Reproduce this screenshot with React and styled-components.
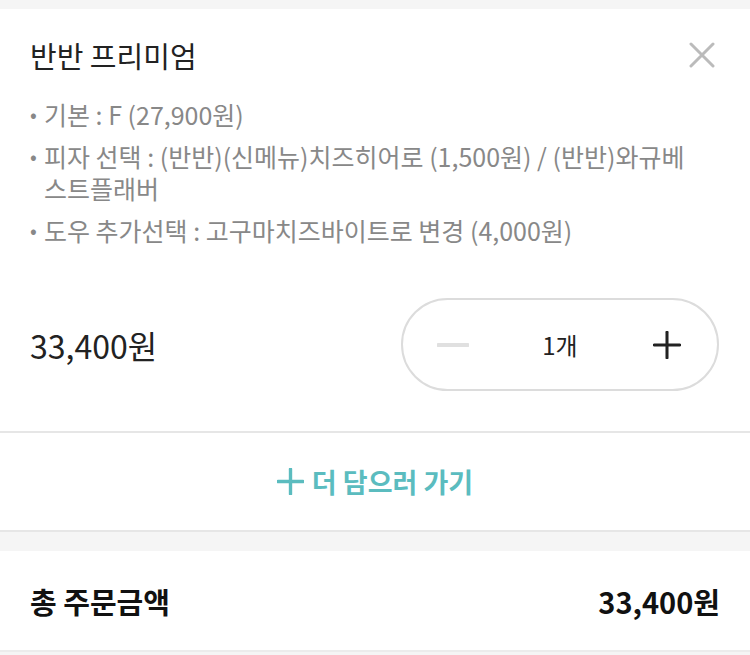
import React from 'react'
import styled, { createGlobalStyle } from 'styled-components'

const GlobalStyle = createGlobalStyle`
  * { box-sizing: border-box; }
  body {
    margin: 0;
    background: #f5f5f5;
    font-family: "Noto Sans CJK KR", "Noto Sans", sans-serif;
    color: #222;
  }
`;

const Page = styled.div`
  padding-top: 9px;
  background: #f5f5f5;
`;

const Card = styled.div`
  background: #fff;
  padding: 24px 30px 40px;
  border-bottom: 2px solid #e6e6e6;
`;

const TitleRow = styled.div`
  display: flex;
  justify-content: space-between;
  align-items: center;
  height: 44px;
`;

const Title = styled.h1`
  margin: 0;
  font-size: 29px;
  font-weight: 400;
  line-height: 44px;
  color: #222;
`;

const CloseButton = styled.button`
  border: 0;
  background: none;
  padding: 0;
  width: 28px;
  height: 28px;
  margin-right: 4px;
  display: flex;
  align-items: center;
  justify-content: center;
`;

const Options = styled.ul`
  list-style: none;
  margin: 21px 15px 0 0;
  padding: 0;
  display: flex;
  flex-direction: column;
  gap: 10px;
`;

const Option = styled.li`
  display: flex;
  font-size: 25px;
  line-height: 32px;
  color: #888;
`;

const Bullet = styled.span`
  flex: none;
  width: 14px;
  font-size: 20px;
`;

const PriceRow = styled.div`
  display: flex;
  justify-content: space-between;
  align-items: center;
  margin-top: 52px;
`;

const Price = styled.div`
  font-size: 32px;
  color: #222;
`;

const Stepper = styled.div`
  width: 318px;
  height: 93px;
  border: 2px solid #dcdcdc;
  border-radius: 47px;
  display: flex;
  align-items: center;
  justify-content: space-between;
  padding: 0 34px;
  margin-right: 1px;
`;

const StepButton = styled.button`
  border: 0;
  background: none;
  padding: 0;
  width: 32px;
  height: 32px;
  display: flex;
  align-items: center;
  justify-content: center;
`;

const Count = styled.span`
  font-size: 24px;
  color: #222;
`;

const MoreSection = styled.div`
  background: #fff;
  height: 99px;
  border-bottom: 2px solid #e6e6e6;
  display: flex;
  align-items: center;
  justify-content: center;
  gap: 8px;
  color: #5bbcbf;
  font-size: 27px;
  font-weight: 600;
`;

const Gap = styled.div`
  height: 19px;
`;

const TotalRow = styled.div`
  background: #fff;
  height: 101px;
  border-bottom: 2px solid #ececec;
  padding: 0 30px;
  display: flex;
  justify-content: space-between;
  align-items: center;
  font-size: 29px;
  font-weight: 700;
  color: #111;
`;

const Icon = ({ size, color, stroke, minus }) => (
  <svg width={size} height={size} viewBox="0 0 24 24">
    <line x1="1" y1="12" x2="23" y2="12" stroke={color} strokeWidth={stroke} strokeLinecap="round" />
    {!minus && <line x1="12" y1="1" x2="12" y2="23" stroke={color} strokeWidth={stroke} strokeLinecap="round" />}
  </svg>
);

const App = () => {
  return (
    <Page>
      <GlobalStyle />
      <Card>
        <TitleRow>
          <Title>반반 프리미엄</Title>
          <CloseButton>
            <svg width="26" height="26" viewBox="0 0 26 26">
              <path d="M2 2 L24 24 M24 2 L2 24" stroke="#bbb" strokeWidth="3" strokeLinecap="round" />
            </svg>
          </CloseButton>
        </TitleRow>
        <Options>
          <Option><Bullet>•</Bullet><span>기본 : F (27,900원)</span></Option>
          <Option><Bullet>•</Bullet><span>피자 선택 : (반반)(신메뉴)치즈히어로 (1,500원) / (반반)와규베스트플래버</span></Option>
          <Option><Bullet>•</Bullet><span>도우 추가선택 : 고구마치즈바이트로 변경 (4,000원)</span></Option>
        </Options>
        <PriceRow>
          <Price>33,400원</Price>
          <Stepper>
            <StepButton><Icon size={32} color="#e0e0e0" stroke={3} minus /></StepButton>
            <Count>1개</Count>
            <StepButton><Icon size={28} color="#222" stroke={2.6} /></StepButton>
          </Stepper>
        </PriceRow>
      </Card>
      <MoreSection>
        <Icon size={27} color="#5bbcbf" stroke={3} />
        <span>더 담으러 가기</span>
      </MoreSection>
      <Gap />
      <TotalRow>
        <span>총 주문금액</span>
        <span>33,400원</span>
      </TotalRow>
    </Page>
  )
}

export default App
